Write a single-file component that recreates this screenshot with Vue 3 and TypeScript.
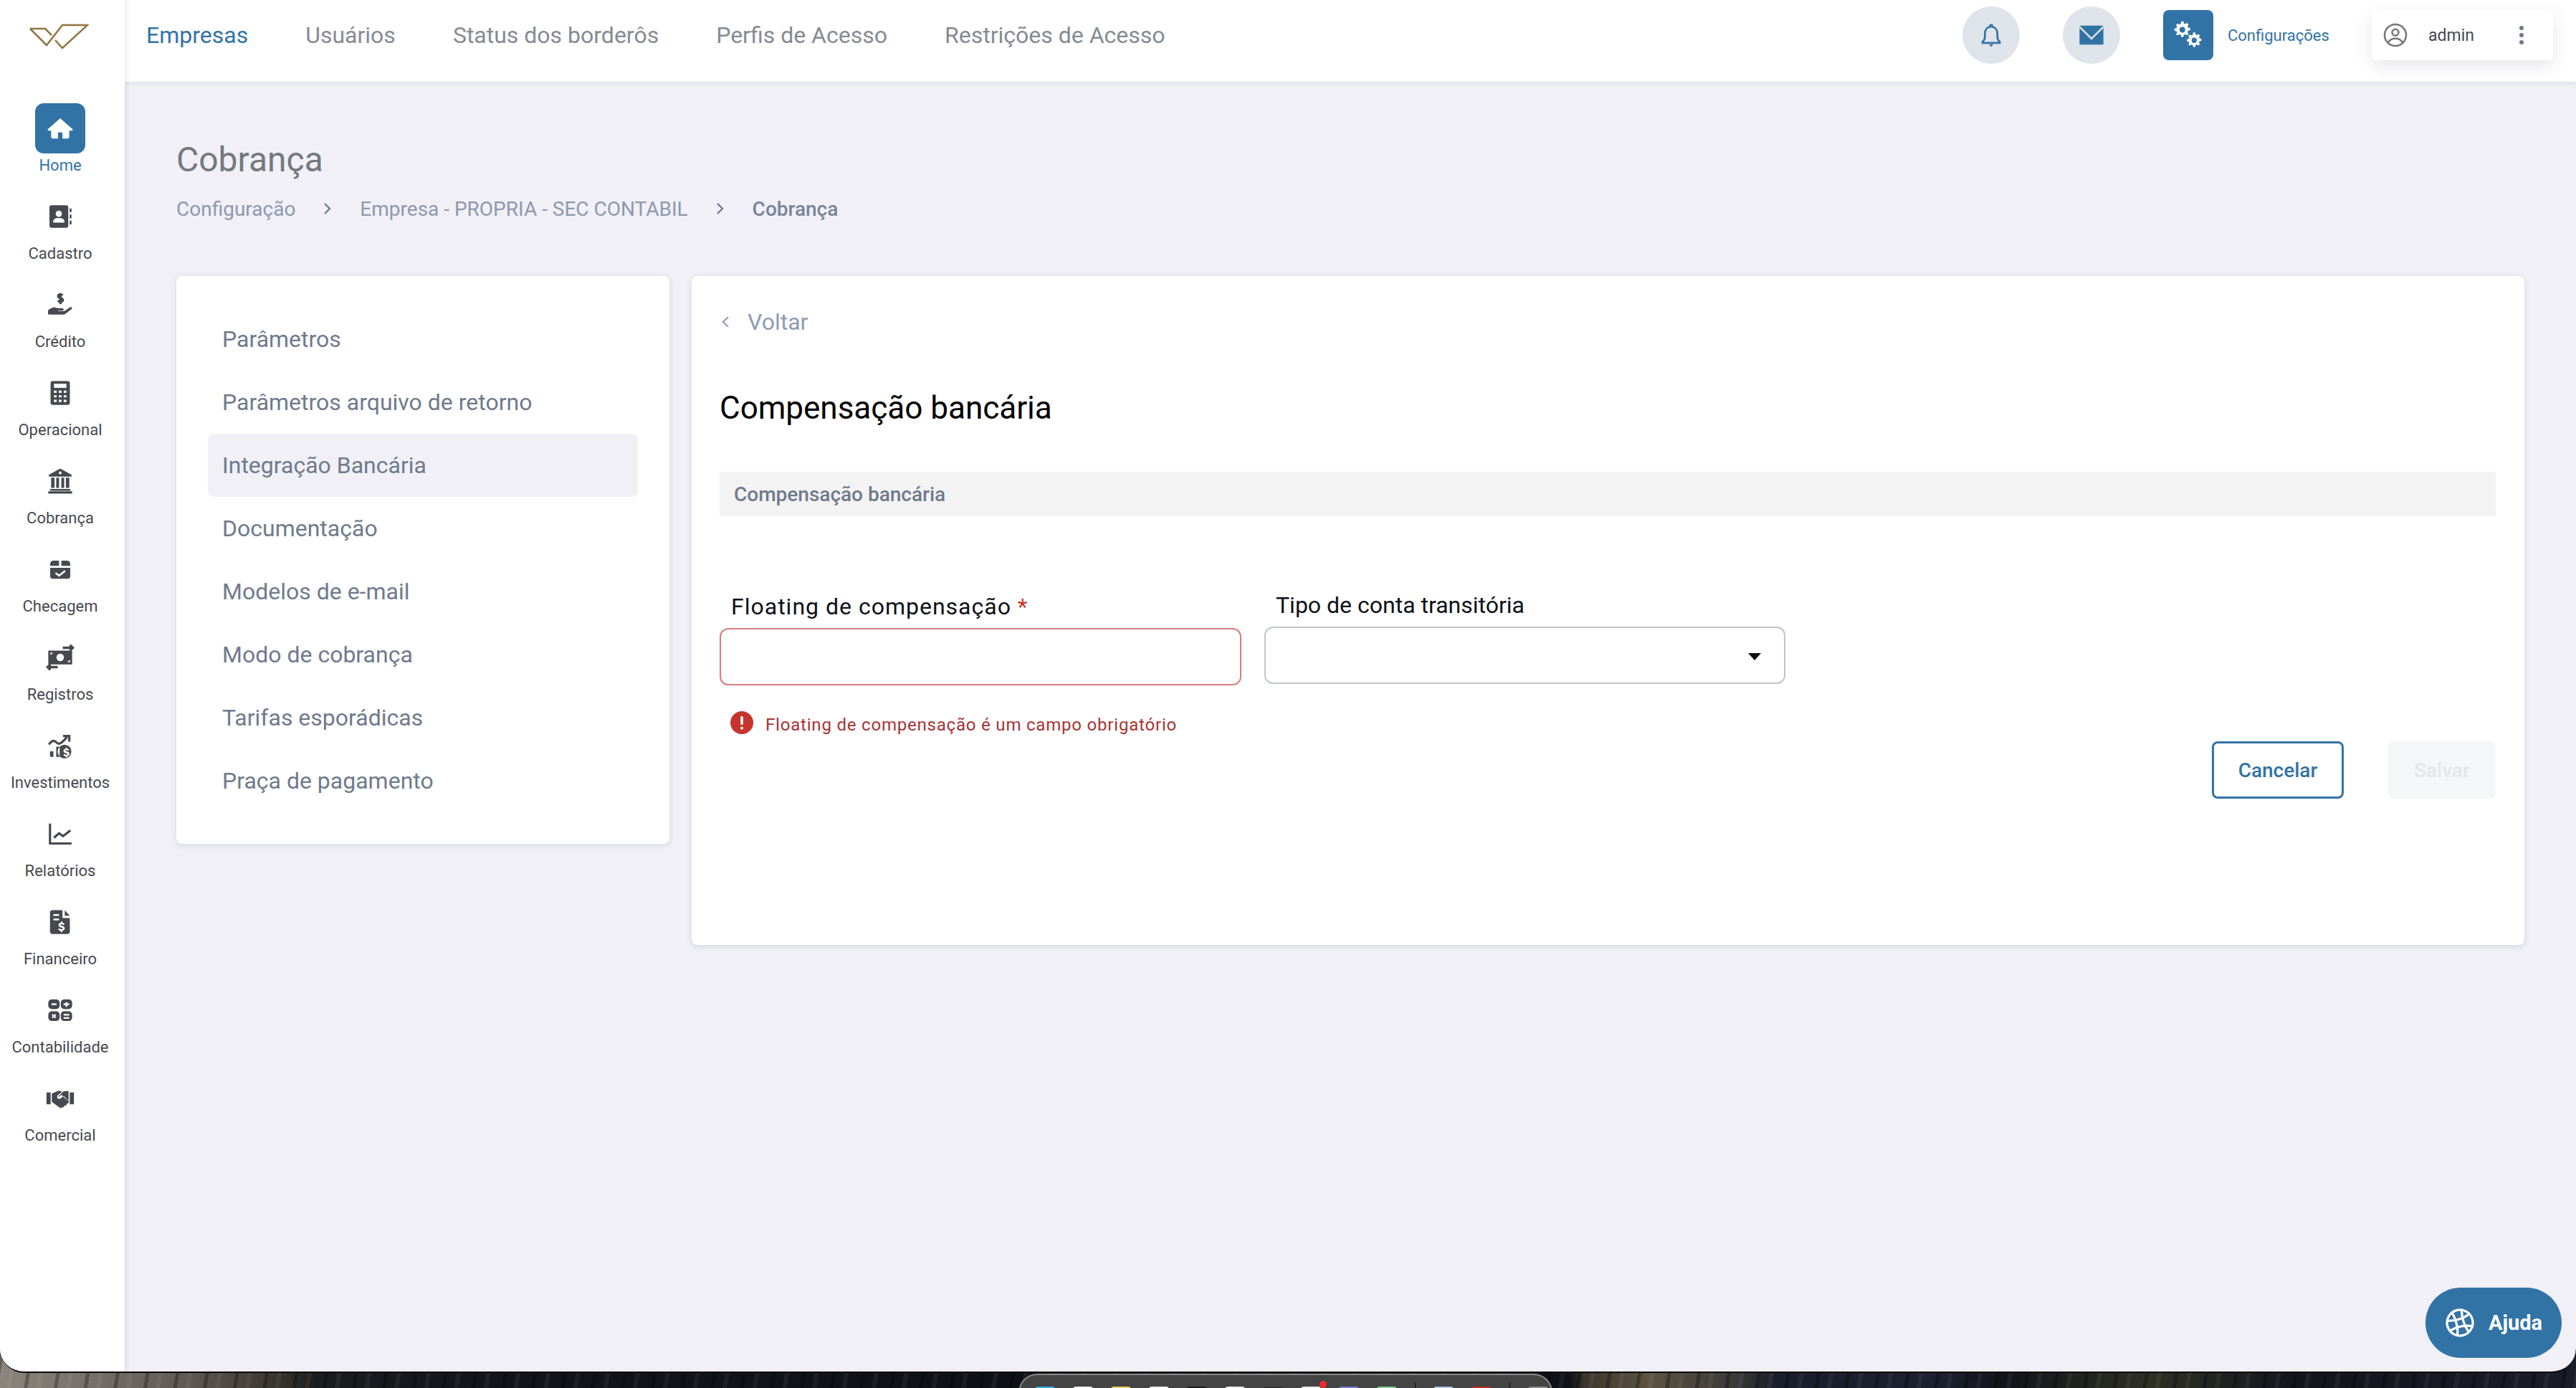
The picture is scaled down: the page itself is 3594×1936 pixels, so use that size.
<script setup lang="ts">
interface NavIcon {
  label: string
  size: number
  fill?: string
  stroke?: string
  active?: boolean
}

const topLinks: string[] = ['Empresas', 'Usuários', 'Status dos borderôs', 'Perfis de Acesso', 'Restrições de Acesso']
const menu: string[] = [
  'Parâmetros',
  'Parâmetros arquivo de retorno',
  'Integração Bancária',
  'Documentação',
  'Modelos de e-mail',
  'Modo de cobrança',
  'Tarifas esporádicas',
  'Praça de pagamento'
]
const crumbs: string[] = ['Configuração', 'Empresa - PROPRIA - SEC CONTABIL']

const nav: NavIcon[] = [
  { label: 'Home', size: 38, active: true, fill: 'M12 3.2 1.2 12.6c-.6.6-.2 1.4.5 1.4H4v5.4C4 20.3 4.7 21 5.6 21H10v-4.6c0-.6.4-1 1-1h2c.6 0 1 .4 1 1V21h4.4c.9 0 1.6-.7 1.6-1.6V14h2.3c.7 0 1.1-.8.5-1.4Z' },
  { label: 'Cadastro', size: 36, fill: 'M4 1.5h13.5A2 2 0 0 1 19.5 3.5v17a2 2 0 0 1-2 2H4a2 2 0 0 1-2-2v-17a2 2 0 0 1 2-2ZM10.7 6.5a2.9 2.9 0 1 0 0 5.8 2.9 2.9 0 0 0 0-5.8ZM6 17.6h9.4c.4 0 .6-.3.6-.6 0-2-1.7-3.5-3.8-3.5H9.3C7.1 13.5 5.4 15 5.4 17c0 .3.2.6.6.6ZM20.8 4.5H22.5V8H20.8ZM20.8 10.2H22.5V13.7H20.8ZM20.8 15.9H22.5V19.4H20.8Z' },
  { label: 'Crédito', size: 40, fill: 'M2 16.5c1.7-1.5 3.4-2.3 5.2-2.3 1.3 0 2.6.8 4 .8h2.5c.8 0 1.2.5 1.2 1s-.4 1-1.2 1h-3.4c-.2 0-.2.4 0 .4h4.3c.6 0 1.1-.2 1.500-.5l4-2.700c.7-.5 1.5-.2 1.7.2.2.4.1 1-.4 1.400l-4.800 3.700c-.7.5-1.5.8-2.300.8H2.800c-.6 0-1-.4-1-1v-2.300Z', stroke: 'M14 4.200c-.5-.8-3.700-1.200-3.700.7 0 2 3.900 1.100 3.900 3.100 0 1.900-3.400 1.500-4.100.6M12.200 2.200v9.300' },
  { label: 'Operacional', size: 38, fill: 'M5.5 1.5h13A2 2 0 0 1 20.5 3.5v17a2 2 0 0 1-2 2h-13a2 2 0 0 1-2-2v-17a2 2 0 0 1 2-2ZM6.5 4v3.5h11V4ZM6.5 10v2h2.4v-2ZM10.800 10v2h2.400v-2ZM15.100 10v2h2.400v-2ZM6.500 14v2h2.400v-2ZM10.800 14v2h2.400v-2ZM15.100 14v2h2.400v-2ZM6.500 18v2h2.400v-2ZM10.800 18v2h2.400v-2ZM15.100 18v2h2.400v-2Z' },
  { label: 'Cobrança', size: 38, fill: 'M12 1 2 6.5V8h20V6.5ZM12 3.4a1.3 1.3 0 1 1 0 2.6 1.3 1.3 0 0 1 0-2.600ZM4 9h3v9H4ZM8.500 9h2.500v9H8.500ZM13 9h2.500v9H13ZM17 9h3v9H17ZM3 19h18v1.500H3ZM1.500 21h21v2h-21Z' },
  { label: 'Checagem', size: 32, fill: 'M5 3h5.800v5.500H1.500V6.500C1.500 4.500 3 3 5 3ZM13.200 3H19c2 0 3.500 1.500 3.500 3.500v2h-9.300ZM1.500 10.500h21v9c0 1.400-1.100 2.500-2.500 2.500H4c-1.400 0-2.500-1.100-2.500-2.500ZM16.600 13l-5.700 4.500-3.200-2.300-1.100 1.400 4.300 3.300 6.800-5.400Z' },
  { label: 'Registros', size: 42, fill: 'M2.500 6.500h19v11h-19ZM12 9a3 3 0 1 0 0 6 3 3 0 0 0 0-6ZM4.200 8.200v1.600a1.600 1.600 0 0 0 1.600-1.600ZM19.800 15.800v-1.600a1.600 1.600 0 0 0-1.600 1.600Z', stroke: 'M14 4.300h8M19.800 2.200 22 4.300l-2.200 2.100M10 19.700H2M4.200 17.600 2 19.700l2.200 2.100' },
  { label: 'Investimentos', size: 38, fill: 'M3 17h3v5H4a1 1 0 0 1-1-1ZM8.500 13h3v9h-3ZM17.500 11.500a6 6 0 1 0 0 11.500 6 6 0 0 0 0-11.500Zm.7 2.300v1c.7.100 1.400.4 1.800.8l-.8 1c-.5-.4-1.100-.7-1.800-.7-.6 0-.9.200-.9.500 0 .8 3.700.4 3.700 2.900 0 1.100-.8 1.800-2 2v1h-1.400v-1c-.8-.1-1.600-.5-2.100-1l.9-1c.5.500 1.200.8 1.900.8.600 0 1-.2 1-.6 0-.9-3.700-.5-3.700-2.900 0-1 .8-1.700 2-1.900v-1Z', stroke: 'M2 11c3-4 5-4 7-1.500 2 2.200 5-.5 9-5M14.500 3.500h5.500v5' },
  { label: 'Relatórios', size: 38, stroke: 'M3 3v17.500h19M6.500 15.500l4.500-4 3.500 2.500 6.500-5' },
  { label: 'Financeiro', size: 38, fill: 'M5 1.500h9v6c0 .6.400 1 1 1h5.500v12c0 1.100-.9 2-2 2H5c-1.100 0-2-.9-2-2v-17c0-1.100.9-2 2-2ZM16 1.800 20.500 6.500H16ZM6 5v1.600h5V5ZM6 9v1.600h5V9ZM12.800 11.300v1.200c-1.400.2-2.300 1-2.300 2.200 0 2.600 3.800 1.900 3.800 3 0 .4-.5.7-1.100.7-.8 0-1.500-.3-2-.8l-1 1.200c.6.500 1.300.9 2.300 1v1.200h1.300v-1.200c1.300-.2 2.200-1 2.200-2.200 0-2.700-3.800-1.900-3.800-2.900 0-.4.400-.6 1-.6.700 0 1.300.2 1.800.6l.9-1.100c-.6-.5-1.200-.8-2-.9v-1.200Z' },
  { label: 'Contabilidade', size: 38, fill: 'M4.500 2.500h4a3 3 0 0 1 3 3V8a3 3 0 0 1-3 3h-4a3 3 0 0 1-3-3V5.500a3 3 0 0 1 3-3ZM4.300 6h4.400v1.600H4.300ZM15.500 2.500h4a3 3 0 0 1 3 3V8a3 3 0 0 1-3 3h-4a3 3 0 0 1-3-3V5.500a3 3 0 0 1 3-3ZM16.700 5V6H15v1.600h1.700V9h1.600V7.600H20V6h-1.700V5ZM4.500 13h4a3 3 0 0 1 3 3v2.500a3 3 0 0 1-3 3h-4a3 3 0 0 1-3-3V16a3 3 0 0 1 3-3ZM5.400 15.300 6.500 16.400 7.600 15.300 8.500 16.200 7.400 17.250 8.500 18.300 7.600 19.200 6.500 18.100 5.400 19.200 4.500 18.300 5.600 17.250 4.500 16.200ZM15.500 13h4a3 3 0 0 1 3 3v2.500a3 3 0 0 1-3 3h-4a3 3 0 0 1-3-3V16a3 3 0 0 1 3-3ZM15 15.300h5v1.400h-5ZM15 18.100h5v1.400h-5Z' },
  { label: 'Comercial', size: 40, fill: 'M.5 7h3.500v10H.5ZM20 7h3.500v10H20ZM5 8 9.500 6c1-.4 2-.4 3 0l1 .5-3.500 3c-.8.700-.8 1.800 0 2.500.8.600 1.700.6 2.500 0l2.500-2 4.200 4.500L19 16l-1.500.5-.5 1.500-1.500.2-.7 1.300-1.600.2-1 .6L5 15ZM15 6l4-.2v8l-.4.400L13 9l-2 1.800-.5-.5 3.500-3.500Z' }
]
</script>

<template>
  <div class="desktop">
    <div class="window">
      <aside class="sidebar">
        <div class="logo-cell">
          <svg class="logo" viewBox="0 0 84 36" aria-hidden="true">
            <path d="M2 7H23L32 16M2 7 25 30 47 2H82L47 34 37 23" />
          </svg>
        </div>
        <nav class="side-nav">
          <a v-for="item in nav" :key="item.label" class="side-item" :class="{ active: item.active }">
            <span class="side-icon">
              <svg :width="item.size" :height="item.size" viewBox="0 0 24 24" aria-hidden="true">
                <path v-if="item.fill" :d="item.fill" fill="currentColor" fill-rule="evenodd" />
                <path v-if="item.stroke" :d="item.stroke" fill="none" stroke="currentColor" stroke-width="2" />
              </svg>
            </span>
            <span class="side-label">{{ item.label }}</span>
          </a>
        </nav>
      </aside>

      <div class="column">
        <header class="topbar">
          <nav class="top-links">
            <a v-for="(link, i) in topLinks" :key="link" class="top-link" :class="{ current: i === 0 }">{{ link }}</a>
          </nav>
          <div class="top-actions">
            <button class="round-btn">
              <svg width="36" height="36" viewBox="0 0 24 24" aria-hidden="true">
                <path d="M12 2.500c.6 0 1 .4 1 1v.8c2.900.5 4.800 3 4.800 6v3.200c0 2 .8 3.500 2.200 4.700v1H4v-1c1.400-1.200 2.200-2.700 2.200-4.700v-3.200c0-3 1.900-5.500 4.800-6v-.8c0-.6.400-1 1-1Z" fill="none" stroke="#3273a6" stroke-width="1.800" />
                <path d="M10 20.500h4L12 23Z" fill="#3273a6" />
              </svg>
            </button>
            <button class="round-btn mail">
              <svg width="40" height="40" viewBox="0 0 24 24" aria-hidden="true">
                <path d="M3 4h18c.6 0 1 .4 1 1v14c0 .6-.4 1-1 1H3c-.6 0-1-.4-1-1V5c0-.6.4-1 1-1Z" fill="#3273a6" />
                <path d="M2 5 12 15 22 5" fill="none" stroke="#dfe3ea" stroke-width="1.500" />
              </svg>
            </button>
            <div class="config">
              <span class="config-box">
                <svg width="40" height="40" viewBox="0 0 24 24" aria-hidden="true">
                  <g fill="#fff" fill-rule="evenodd">
                    <path d="M7.500 1.500h2l.3 1.800 1.300.6 1.500-1 1.400 1.400-1 1.500.6 1.300 1.800.3v2l-1.800.3-.6 1.300 1 1.500-1.400 1.400-1.500-1-1.300.6-.3 1.800h-2l-.3-1.800-1.300-.6-1.500 1L2.900 13l1-1.500-.6-1.300L1.500 9.900v-2l1.800-.3.6-1.300-1-1.500L4.300 3.400l1.500 1 1.300-.6ZM8.500 6.400a2.500 2.500 0 1 0 0 5 2.500 2.500 0 0 0 0-5Z" transform="translate(-1 -1) scale(.95)" />
                    <path d="M7.500 1.500h2l.3 1.800 1.300.6 1.500-1 1.400 1.400-1 1.500.6 1.300 1.800.3v2l-1.800.3-.6 1.300 1 1.500-1.400 1.400-1.500-1-1.300.6-.3 1.800h-2l-.3-1.800-1.300-.6-1.500 1L2.900 13l1-1.500-.6-1.300L1.500 9.900v-2l1.800-.3.6-1.300-1-1.500L4.300 3.400l1.500 1 1.300-.6ZM8.500 6.400a2.500 2.500 0 1 0 0 5 2.500 2.500 0 0 0 0-5Z" transform="translate(9.500 8.500) scale(.88)" />
                  </g>
                </svg>
              </span>
              <span class="config-text">Configurações</span>
            </div>
            <div class="user-card">
              <svg class="avatar" width="36" height="36" viewBox="0 0 24 24" aria-hidden="true">
                <circle cx="12" cy="12" r="10" fill="none" stroke="#757575" stroke-width="1.700" />
                <circle cx="12" cy="9.500" r="3" fill="none" stroke="#757575" stroke-width="1.700" />
                <path d="M5.500 18.500c1.500-2.500 3.800-3.300 6.500-3.300s5 .8 6.500 3.300" fill="none" stroke="#757575" stroke-width="1.700" />
              </svg>
              <span class="user-name">admin</span>
              <span class="dots"><i></i><i></i><i></i></span>
            </div>
          </div>
        </header>

        <main class="content">
          <h1 class="page-title">Cobrança</h1>
          <div class="crumbs">
            <template v-for="c in crumbs" :key="c">
              <span>{{ c }}</span>
              <svg width="16" height="20" viewBox="0 0 16 20" aria-hidden="true"><path d="M4 3l7 7-7 7" fill="none" stroke="#6f7a8c" stroke-width="2.400" /></svg>
            </template>
            <span class="crumb-current">Cobrança</span>
          </div>

          <div class="panels">
            <section class="card menu-card">
              <a v-for="(m, i) in menu" :key="m" class="menu-item" :class="{ selected: i === 2 }">{{ m }}</a>
            </section>

            <section class="card form-card">
              <a class="back">
                <svg width="16" height="24" viewBox="0 0 14 20" aria-hidden="true"><path d="M10.500 4 4 10l6.500 6" fill="none" stroke="#8e9bb5" stroke-width="1.800" /></svg>
                <span>Voltar</span>
              </a>
              <h2 class="form-title">Compensação bancária</h2>
              <div class="section-bar">Compensação bancária</div>

              <div class="fields">
                <div class="field field-a">
                  <label class="label label-a">Floating de compensação <span class="req">*</span></label>
                  <div class="input invalid"></div>
                  <div class="error">
                    <svg width="32" height="32" viewBox="0 0 32 32" aria-hidden="true">
                      <circle cx="16" cy="16" r="16" fill="#c5352e" />
                      <rect x="14.200" y="7" width="3.600" height="12" rx="1.500" fill="#fff" />
                      <circle cx="16" cy="23.500" r="2" fill="#fff" />
                    </svg>
                    <span class="error-text">Floating de compensação é um campo obrigatório</span>
                  </div>
                </div>
                <div class="field field-b">
                  <label class="label">Tipo de conta transitória</label>
                  <div class="input select"><i class="caret"></i></div>
                </div>
              </div>

              <div class="actions">
                <button class="btn btn-cancel">Cancelar</button>
                <button class="btn btn-save">Salvar</button>
              </div>
            </section>
          </div>
        </main>
      </div>

      <button class="help">
        <svg width="42" height="42" viewBox="0 0 42 42" aria-hidden="true">
          <g fill="none" stroke="#fff" stroke-width="3.200" transform="rotate(-15 21 21)">
            <circle cx="21" cy="21" r="18" />
            <path d="M5 14c11 3 22 3 33-2M5 28c11-3 22-3 33 3M14 4c3 11 3 23-1 34M28 4c-3 11-2 23 2 34" />
          </g>
        </svg>
        <span>Ajuda</span>
      </button>
    </div>

    <div class="dock">
      <i class="dock-dot"></i>
      <div class="dock-row">
        <i style="background:#2fb4e6"></i><i style="background:#f2f2f2"></i><i style="background:#efd35c"></i><i style="background:#f0f0f0"></i><i style="background:#1a1a1a"></i><i style="background:#efefef"></i><i style="background:#333"></i><i style="background:#eee"></i><i style="background:#7c7ce0"></i><i style="background:#79d88a"></i>
        <b></b>
        <i style="background:#a9c6ea"></i><i style="background:#c9281f"></i>
        <b></b>
        <i style="background:#8d8d8d"></i>
      </div>
    </div>
  </div>
</template>

<style>
html, body { margin: 0; padding: 0; background: #0d1014; }
</style>

<style scoped>
.desktop {
  position: relative;
  width: 3594px;
  height: 1936px;
  overflow: hidden;
  font-family: Roboto, "Liberation Sans", sans-serif;
  background:
    repeating-linear-gradient(100deg, rgba(0, 0, 0, .28) 0 5px, transparent 5px 17px, rgba(255, 255, 255, .05) 17px 23px, transparent 23px 41px),
    linear-gradient(90deg, #8a867d 0, #75716a 120px, #5e5a52 260px, #4a463f 330px, #333028 400px, #1a1d20 440px, #111418 700px, #0e1116 1420px, #0e1116 2190px, #3a352c 2210px, #5c5342 2300px, #3a3a38 2420px, #1a1d2a 2480px, #1d2030 2700px, #12141a 2800px, #2e3024 3000px, #13151d 3200px, #1a1c28 3594px);
}
.window {
  position: relative;
  display: flex;
  width: 3594px;
  height: 1913px;
  background: #f0f0f6;
  border-radius: 0 0 34px 34px;
  border-bottom: 2px solid #0b0b0b;
  overflow: hidden;
}
.sidebar {
  flex: 0 0 174px;
  width: 174px;
  background: #fff;
  box-shadow: 2px 0 6px rgba(60, 60, 90, .12);
  z-index: 3;
}
.logo-cell { height: 114px; padding: 33px 0 0 40px; box-sizing: border-box; }
.logo { width: 84px; height: 36px; display: block; }
.logo path { fill: none; stroke: #927540; stroke-width: 2.500; }
.side-nav { display: flex; flex-direction: column; padding: 30px 6px 0 0; }
.side-item { display: flex; flex-direction: column; align-items: center; height: 123px; color: #46494f; }
.side-icon { width: 70px; height: 70px; flex: none; border-radius: 12px; display: flex; align-items: center; justify-content: center; }
.side-label { font-size: 22px; line-height: 30px; margin-top: 2px; white-space: nowrap; }
.side-item.active .side-icon { background: #3273a6; color: #fff; }
.side-item.active .side-label { color: #3273a6; }

.column { flex: 1; min-width: 0; display: flex; flex-direction: column; }
.topbar {
  height: 114px;
  flex: 0 0 114px;
  background: #fff;
  box-shadow: 0 2px 6px rgba(60, 60, 90, .1);
  display: flex;
  justify-content: space-between;
  padding: 0 32px 0 30px;
  box-sizing: border-box;
  z-index: 2;
}
.top-links { display: flex; gap: 80px; align-items: flex-start; padding-top: 27px; }
.top-link { font-size: 32px; line-height: 44px; color: #858b93; white-space: nowrap; }
.top-link.current { color: #3273a6; }
.top-actions { display: flex; align-items: flex-start; }
.round-btn {
  width: 80px;
  height: 80px;
  margin: 9px 60px 0 0;
  padding: 0;
  border: 0;
  border-radius: 50%;
  background: #dfe3ea;
  display: flex;
  align-items: center;
  justify-content: center;
}
.config { display: flex; align-items: center; margin-top: 14px; gap: 20px; width: 291px; }
.config-box { width: 70px; height: 70px; border-radius: 8px; background: #3273a6; display: flex; align-items: center; justify-content: center; }
.config-text { font-size: 22px; color: #3273a6; white-space: nowrap; }
.user-card {
  width: 253px;
  height: 70px;
  margin-top: 14px;
  border-radius: 6px;
  background: #fff;
  box-shadow: 0 8px 24px rgba(60, 60, 90, .13);
  display: flex;
  align-items: center;
  padding-left: 15px;
  box-sizing: border-box;
}
.user-name { font-size: 23px; color: #46494f; margin-left: 28px; }
.dots { display: flex; flex-direction: column; gap: 4px; margin-left: 63px; }
.dots i { width: 6px; height: 6px; border-radius: 50%; background: #6f7a8c; }

.content { flex: 1; padding: 77px 72px 0 72px; min-height: 0; }
.page-title { margin: 0; font-size: 48px; line-height: 64px; font-weight: 400; color: #74787e; }
.crumbs { display: flex; align-items: center; gap: 37px; margin-top: 14px; height: 44px; font-size: 28px; color: #8e98ae; white-space: nowrap; }
.crumb-current { color: #7b8496; font-weight: 500; }
.panels { display: flex; align-items: flex-start; gap: 31px; margin-top: 72px; }
.card { background: #fff; border-radius: 8px; box-shadow: 0 2px 8px rgba(60, 60, 90, .14); box-sizing: border-box; }
.menu-card { flex: 0 0 688px; height: 792px; padding: 44px; display: flex; flex-direction: column; }
.menu-item { height: 88px; flex: 0 0 88px; display: flex; align-items: center; padding-left: 20px; font-size: 32px; color: #6f7a8c; border-radius: 8px; }
.menu-item.selected { background: #f0f0f6; }
.form-card { flex: 1; height: 933px; padding: 42px 40px 0 39px; display: flex; flex-direction: column; }
.back { display: flex; align-items: center; gap: 23px; height: 44px; flex: none; font-size: 32px; color: #8e9bb5; }
.form-title { margin: 68px 0 0; font-size: 44px; line-height: 60px; font-weight: 400; color: #000; }
.section-bar { margin-top: 59px; height: 62px; flex: none; display: flex; align-items: center; padding-left: 20px; background: #f3f3f4; font-size: 28px; font-weight: 500; color: #6f7a8c; }
.fields { display: flex; gap: 32px; margin-top: 104px; height: 210px; flex: none; }
.field { width: 728px; flex: 0 0 728px; display: flex; flex-direction: column; }
.field-b { width: 727px; flex-basis: 727px; margin-top: -2px; }
.label { height: 44px; flex: none; line-height: 44px; margin-bottom: 8px; padding-left: 16px; font-size: 32px; color: #0c1116; white-space: nowrap; }
.label-a { letter-spacing: 1px; }
.req { color: #c5352e; }
.input { height: 80px; flex: none; box-sizing: border-box; border: 2px solid #c0c5cb; border-radius: 12px; background: #fff; position: relative; }
.input.invalid { border-color: #d97c7c; }
.caret { position: absolute; right: 32px; top: 35px; width: 0; height: 0; border-left: 9px solid transparent; border-right: 9px solid transparent; border-top: 10px solid #0c1116; }
.error { display: flex; align-items: center; gap: 17px; padding-left: 15px; margin-top: 35px; font-size: 24px; letter-spacing: .8px; color: #a93232; white-space: nowrap; }
.error-text { padding-top: 6px; }
.actions { display: flex; justify-content: flex-end; gap: 62px; flex: none; }
.btn { height: 80px; border-radius: 8px; font-family: inherit; font-size: 28px; font-weight: 500; box-sizing: border-box; }
.btn-cancel { width: 184px; background: #fff; border: 3px solid #3273a6; color: #3273a6; }
.btn-save { width: 150px; background: #f5f6f8; border: 0; color: #e4e6ea; }
.help {
  position: absolute;
  left: 3384px;
  top: 1796px;
  width: 190px;
  height: 98px;
  border: 0;
  border-radius: 49px;
  background: #3273a6;
  display: flex;
  align-items: center;
  gap: 19px;
  padding: 0 0 0 27px;
  box-sizing: border-box;
  color: #fff;
  font-family: inherit;
  font-size: 29px;
  font-weight: 700;
  z-index: 5;
}
.dock {
  position: absolute;
  left: 1421px;
  top: 1916px;
  width: 745px;
  height: 40px;
  box-sizing: border-box;
  background: #444;
  border: 2px solid #8a8a86;
  border-bottom: 0;
  border-radius: 26px 26px 0 0;
}
.dock-row { position: absolute; left: 21px; top: 16px; display: flex; align-items: flex-start; gap: 25px; }
.dock-row i { width: 28px; height: 4px; border-radius: 4px 4px 0 0; display: block; }
.dock-row b { width: 1px; height: 8px; margin-top: -6px; background: #0b0b0b; }
.dock-dot { position: absolute; left: 418px; top: 8px; width: 10px; height: 10px; border-radius: 50%; background: #f42a2a; }
</style>
